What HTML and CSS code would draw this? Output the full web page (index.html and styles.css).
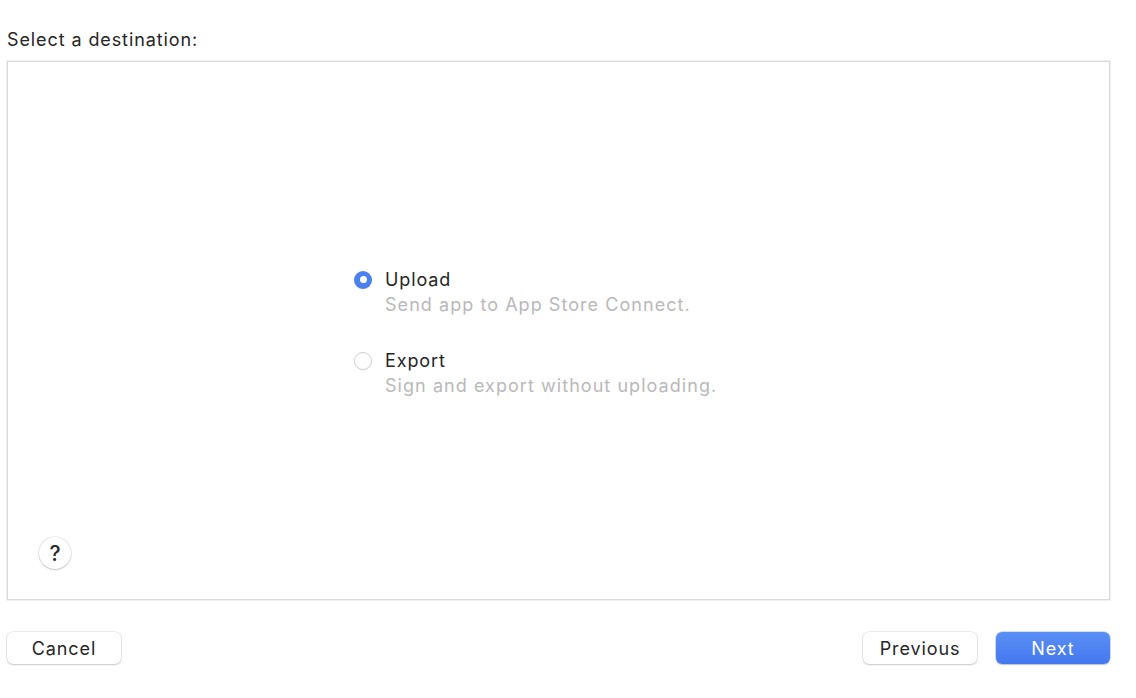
FILE: index.html
```html
<!DOCTYPE html>
<html>
<head>
<meta charset="utf-8">
<link rel="stylesheet" href="styles.css">
</head>
<body>
<div class="page">
  <div class="title">Select a destination:</div>
  <div class="panel">
    <div class="options">
      <div class="option">
        <span class="radio radio-on"></span>
        <div class="option-text">
          <div class="label">Upload</div>
          <div class="sub">Send app to App Store Connect.</div>
        </div>
      </div>
      <div class="option">
        <span class="radio"></span>
        <div class="option-text">
          <div class="label">Export</div>
          <div class="sub">Sign and export without uploading.</div>
        </div>
      </div>
    </div>
    <div class="help-row">
      <button class="help">?</button>
    </div>
  </div>
  <div class="footer">
    <button class="btn">Cancel</button>
    <div class="right">
      <button class="btn">Previous</button>
      <button class="btn btn-primary">Next</button>
    </div>
  </div>
</div>
</body>
</html>
```

FILE: styles.css
```css
html, body {
  margin: 0;
  padding: 0;
  background: #ffffff;
}
body {
  font-family: Inter, "Liberation Sans", Arial, sans-serif;
  color: #262626;
  width: 1136px;
  height: 698px;
  overflow: hidden;
}
.page {
  padding: 29px 26px 0 7px;
}
.title {
  font-size: 18px;
  letter-spacing: 0.9px;
  line-height: 22px;
  height: 22px;
  color: #262626;
}
.panel {
  margin-top: 10px;
  height: 537px;
  border: 1px solid #dadada;
  box-shadow: 0 0 0 1px #f1f1f1;
  background: #fff;
  display: grid;
  grid-template-rows: 1fr auto 1fr;
}
.options {
  grid-row: 2;
  display: flex;
  flex-direction: column;
  gap: 30px;
  padding-left: 346px;
  padding-top: 4px;
}
.option {
  display: flex;
  align-items: flex-start;
  gap: 13px;
}
.radio {
  flex: none;
  width: 18px;
  height: 18px;
  border-radius: 50%;
  border: 1px solid #d2d2d2;
  background: #fff;
  box-shadow: 0 0.5px 1px rgba(0,0,0,0.08);
  margin-top: 4px;
  box-sizing: border-box;
}
.radio-on {
  border: none;
  background: #4b80ef;
  position: relative;
  box-shadow: 0 0.5px 1px rgba(0,0,0,0.1);
}
.radio-on::after {
  content: "";
  position: absolute;
  left: 5.5px;
  top: 5.5px;
  width: 7px;
  height: 7px;
  border-radius: 50%;
  background: #fff;
}
.label {
  font-size: 18px;
  letter-spacing: 0.9px;
  line-height: 25px;
  color: #262626;
}
.sub {
  font-size: 18px;
  letter-spacing: 1.05px;
  line-height: 26px;
  color: #b9b9b9;
}
.help-row {
  grid-row: 3;
  align-self: end;
  padding: 0 0 30px 31px;
}
.help {
  width: 32px;
  height: 32px;
  border-radius: 50%;
  border: none;
  background: #fff;
  box-shadow: 0 0 0 0.5px rgba(0,0,0,0.12), 0 1px 2px rgba(0,0,0,0.18);
  font-family: Inter, "Liberation Sans", Arial, sans-serif;
  font-size: 21px;
  font-weight: 500;
  color: #2a2a2a;
  padding: 0;
  display: flex;
  align-items: center;
  justify-content: center;
}
.footer {
  margin-top: 32px;
  display: flex;
  justify-content: space-between;
  align-items: center;
}
.right {
  display: flex;
  gap: 19px;
}
.btn {
  width: 114px;
  height: 32px;
  border-radius: 6px;
  border: none;
  background: #fff;
  box-shadow: 0 0 0 0.5px rgba(0,0,0,0.14), 0 1px 2px rgba(0,0,0,0.16);
  font-family: Inter, "Liberation Sans", Arial, sans-serif;
  font-size: 18px;
  letter-spacing: 0.9px;
  color: #262626;
  padding: 0;
}
.btn-primary {
  background: linear-gradient(#5a8ff5, #4478ee);
  color: #fff;
  box-shadow: 0 0 0 0.5px rgba(40,90,210,0.4), 0 1px 2px rgba(0,0,0,0.14);
}
```
